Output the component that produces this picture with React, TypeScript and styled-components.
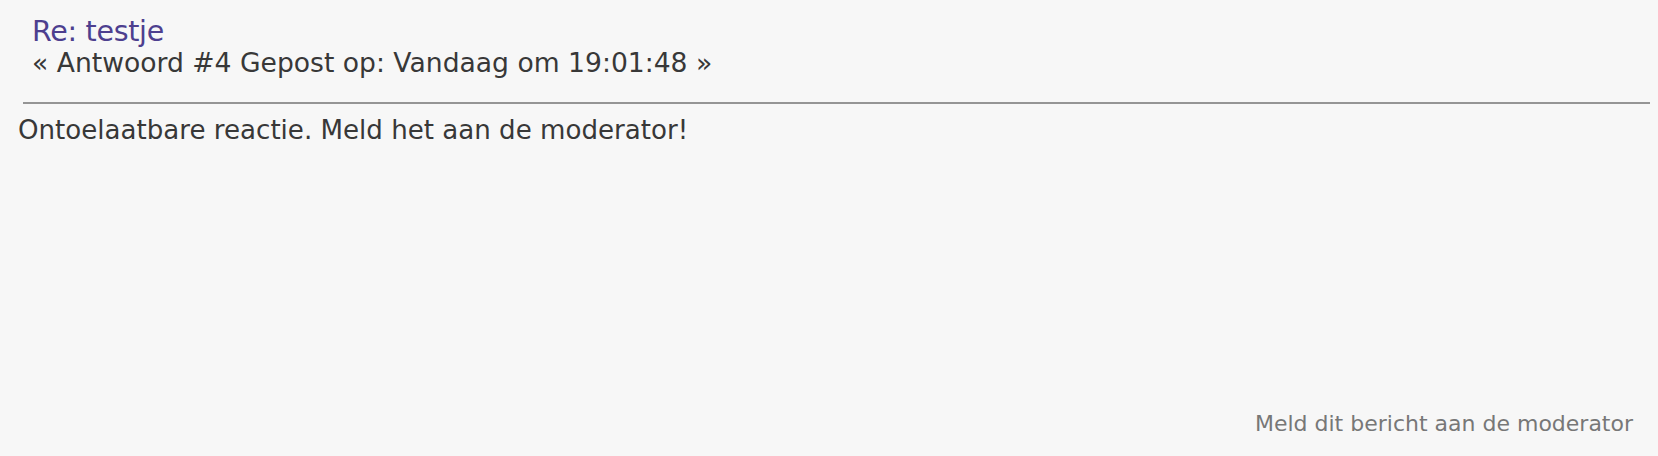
import React from "react";
import styled, { createGlobalStyle } from "styled-components";

const Global = createGlobalStyle`
  html, body { margin: 0; padding: 0; background: #f7f7f7; }
  body { font-family: "DejaVu Sans", Verdana, sans-serif; }
`;

const Post = styled.div`
  display: flex;
  flex-direction: column;
  height: 456px;
  box-sizing: border-box;
  padding: 16px 8px 0 18px;
  background: #f7f7f7;
`;

const Header = styled.div`
  display: flex;
  flex-direction: column;
  align-items: flex-start;
  padding-left: 14px;
  padding-bottom: 24px;
`;

const Title = styled.a`
  font-family: "DejaVu Sans", Tahoma, sans-serif;
  font-size: 28.5px;
  line-height: 32px;
  letter-spacing: -0.3px;
  color: #4d3f8f;
  text-decoration: none;
`;

const Meta = styled.div`
  font-family: "DejaVu Sans", Verdana, sans-serif;
  font-size: 26.6px;
  line-height: 30px;
  color: #383838;
`;

const Rule = styled.hr`
  margin: 0 0 0 5px;
  border: 0;
  height: 2px;
  background: #959595;
`;

const Body = styled.div`
  flex: 1;
  font-family: "DejaVu Sans", Verdana, sans-serif;
  font-size: 26.1px;
  line-height: 30px;
  color: #383838;
  padding-top: 11px;
`;

const Footer = styled.div`
  display: flex;
  justify-content: flex-end;
  padding: 0 17px 20px 0;
`;

const ReportLink = styled.a`
  font-family: "DejaVu Sans", Verdana, sans-serif;
  font-size: 22px;
  line-height: 24px;
  color: #777;
  text-decoration: none;
`;

export default function App() {
  return (
    <>
      <Global />
      <Post>
        <Header>
          <Title href="#">Re: testje</Title>
          <Meta>« Antwoord #4 Gepost op: Vandaag om 19:01:48 »</Meta>
        </Header>
        <Rule />
        <Body>Ontoelaatbare reactie. Meld het aan de moderator!</Body>
        <Footer>
          <ReportLink href="#">Meld dit bericht aan de moderator</ReportLink>
        </Footer>
      </Post>
    </>
  );
}
